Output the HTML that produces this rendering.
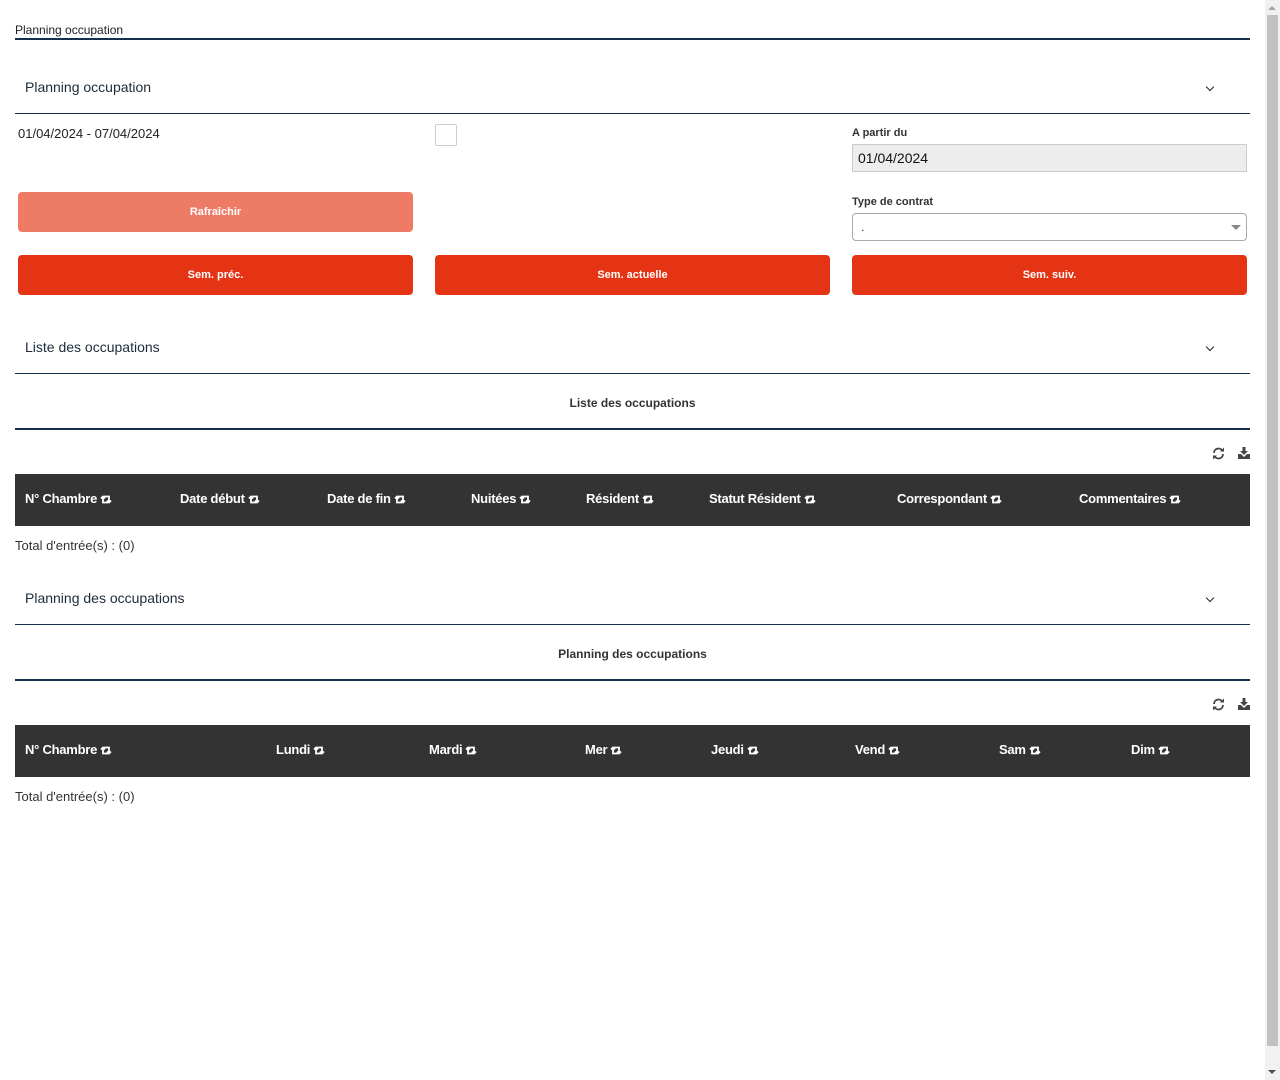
<!DOCTYPE html>
<html><head><meta charset="utf-8"><style>
*{margin:0;padding:0;box-sizing:border-box}
body{width:1280px;height:1080px;background:#fff;font-family:"Liberation Sans",sans-serif;color:#333;position:relative;overflow:hidden}
.a{position:absolute}
.line{position:absolute;left:15px;width:1235px;background:#13304f}
.sec{position:absolute;left:25px;font-size:14px;color:#1d2b3a}
.chev{position:absolute;left:1207px;width:6px;height:6px;border-right:1.3px solid #223;border-bottom:1.3px solid #223;transform:rotate(45deg)}
.btn{position:absolute;height:40px;border-radius:4px;background:#e53414;color:#fff;font-weight:bold;font-size:11px;text-align:center;line-height:40px}
.lbl{position:absolute;font-size:11px;font-weight:bold;color:#333}
.th{position:absolute;left:15px;width:1235px;height:52px;background:#333}
.th span{position:absolute;top:17px;color:#fff;font-weight:bold;font-size:13px;white-space:nowrap;letter-spacing:-0.25px}
.th svg{vertical-align:-1px;margin-left:3px}
.tot{position:absolute;left:15px;font-size:13px;color:#333}
.ttl{position:absolute;left:15px;width:1235px;text-align:center;font-size:12px;font-weight:bold;color:#333}
</style></head><body>
<svg width="0" height="0" style="position:absolute"><defs><g id="s"><path d="M1 3.5 L3 1.5 L5 3.5 M3 2 V7.5 H8 M11 5.5 L9 7.5 L7 5.5 M9 7 V1.5 H4" fill="none" stroke="#fff" stroke-width="1.8"/></g></defs></svg>

<div class="a" style="left:15px;top:23px;font-size:12px;color:#222">Planning occupation</div>
<div class="line" style="top:38px;height:2px"></div>

<div class="sec" style="top:79px">Planning occupation</div>
<div class="chev" style="top:84px"></div>
<div class="line" style="top:113px;height:1px"></div>

<div class="a" style="left:18px;top:126px;font-size:13px;color:#222">01/04/2024 - 07/04/2024</div>
<div class="a" style="left:435px;top:124px;width:22px;height:22px;border:1px solid #ccc;border-radius:2px"></div>

<div class="lbl" style="left:852px;top:127px">A partir du</div>
<div class="a" style="left:852px;top:144px;width:395px;height:28px;background:#ededed;border:1px solid #ccc;font-size:14px;color:#111;padding:5px 0 0 5px">01/04/2024</div>

<div class="lbl" style="left:852px;top:196px">Type de contrat</div>
<div class="a" style="left:852px;top:213px;width:395px;height:28px;border:1px solid #aaa;border-radius:4px;font-size:12px;padding:6px 0 0 8px">.</div>
<div class="a" style="left:1231px;top:225px;width:0;height:0;border-left:5px solid transparent;border-right:5px solid transparent;border-top:5px solid #888"></div>

<div class="btn" style="left:18px;top:192px;width:395px;background:#ee7b66">Rafraîchir</div>
<div class="btn" style="left:18px;top:255px;width:395px">Sem. préc.</div>
<div class="btn" style="left:435px;top:255px;width:395px">Sem. actuelle</div>
<div class="btn" style="left:852px;top:255px;width:395px">Sem. suiv.</div>

<div class="sec" style="top:339px">Liste des occupations</div>
<div class="chev" style="top:344px"></div>
<div class="line" style="top:373px;height:1px"></div>
<div class="ttl" style="top:396px">Liste des occupations</div>
<div class="line" style="top:428px;height:2px"></div>

<svg class="a" style="left:1212px;top:447px" width="13" height="13" viewBox="0 0 13 13"><path d="M2 6 A4.5 4.5 0 0 1 10.5 4 M11 7 A4.5 4.5 0 0 1 2.5 9" fill="none" stroke="#444" stroke-width="1.8"/><path d="M8 4.5 L12 4.5 L12 0.5Z M5 8.5 L1 8.5 L1 12.5Z" fill="#444"/></svg>
<svg class="a" style="left:1238px;top:447px" width="12" height="12" viewBox="0 0 12 12"><path d="M4.5 0 H7.5 V4 H10 L6 8 L2 4 H4.5Z M0 7 H3 L6 10 L9 7 H12 V12 H0Z" fill="#444"/></svg>

<div class="th" style="top:474px">
<span style="left:10px">N° Chambre<svg width="12" height="9"><use href="#s"/></svg></span>
<span style="left:165px">Date début<svg width="12" height="9"><use href="#s"/></svg></span>
<span style="left:312px">Date de fin<svg width="12" height="9"><use href="#s"/></svg></span>
<span style="left:456px">Nuitées<svg width="12" height="9"><use href="#s"/></svg></span>
<span style="left:571px">Résident<svg width="12" height="9"><use href="#s"/></svg></span>
<span style="left:694px">Statut Résident<svg width="12" height="9"><use href="#s"/></svg></span>
<span style="left:882px">Correspondant<svg width="12" height="9"><use href="#s"/></svg></span>
<span style="left:1064px">Commentaires<svg width="12" height="9"><use href="#s"/></svg></span>
</div>
<div class="tot" style="top:538px">Total d'entrée(s) : (0)</div>

<div class="sec" style="top:590px">Planning des occupations</div>
<div class="chev" style="top:595px"></div>
<div class="line" style="top:624px;height:1px"></div>
<div class="ttl" style="top:647px">Planning des occupations</div>
<div class="line" style="top:679px;height:2px"></div>

<svg class="a" style="left:1212px;top:698px" width="13" height="13" viewBox="0 0 13 13"><path d="M2 6 A4.5 4.5 0 0 1 10.5 4 M11 7 A4.5 4.5 0 0 1 2.5 9" fill="none" stroke="#444" stroke-width="1.8"/><path d="M8 4.5 L12 4.5 L12 0.5Z M5 8.5 L1 8.5 L1 12.5Z" fill="#444"/></svg>
<svg class="a" style="left:1238px;top:698px" width="12" height="12" viewBox="0 0 12 12"><path d="M4.5 0 H7.5 V4 H10 L6 8 L2 4 H4.5Z M0 7 H3 L6 10 L9 7 H12 V12 H0Z" fill="#444"/></svg>

<div class="th" style="top:725px">
<span style="left:10px">N° Chambre<svg width="12" height="9"><use href="#s"/></svg></span>
<span style="left:261px">Lundi<svg width="12" height="9"><use href="#s"/></svg></span>
<span style="left:414px">Mardi<svg width="12" height="9"><use href="#s"/></svg></span>
<span style="left:570px">Mer<svg width="12" height="9"><use href="#s"/></svg></span>
<span style="left:696px">Jeudi<svg width="12" height="9"><use href="#s"/></svg></span>
<span style="left:840px">Vend<svg width="12" height="9"><use href="#s"/></svg></span>
<span style="left:984px">Sam<svg width="12" height="9"><use href="#s"/></svg></span>
<span style="left:1116px">Dim<svg width="12" height="9"><use href="#s"/></svg></span>
</div>
<div class="tot" style="top:789px">Total d'entrée(s) : (0)</div>

<div class="a" style="left:1265px;top:0;width:15px;height:1080px;background:#f1f1f1"></div>
<div class="a" style="left:1267px;top:15px;width:11px;height:1031px;background:#c1c1c1"></div>
<div class="a" style="left:1268px;top:6px;width:0;height:0;border-left:4px solid transparent;border-right:4px solid transparent;border-bottom:4px solid #a3a3a3"></div>
<div class="a" style="left:1268px;top:1070px;width:0;height:0;border-left:4px solid transparent;border-right:4px solid transparent;border-top:4px solid #505050"></div>
</body></html>
